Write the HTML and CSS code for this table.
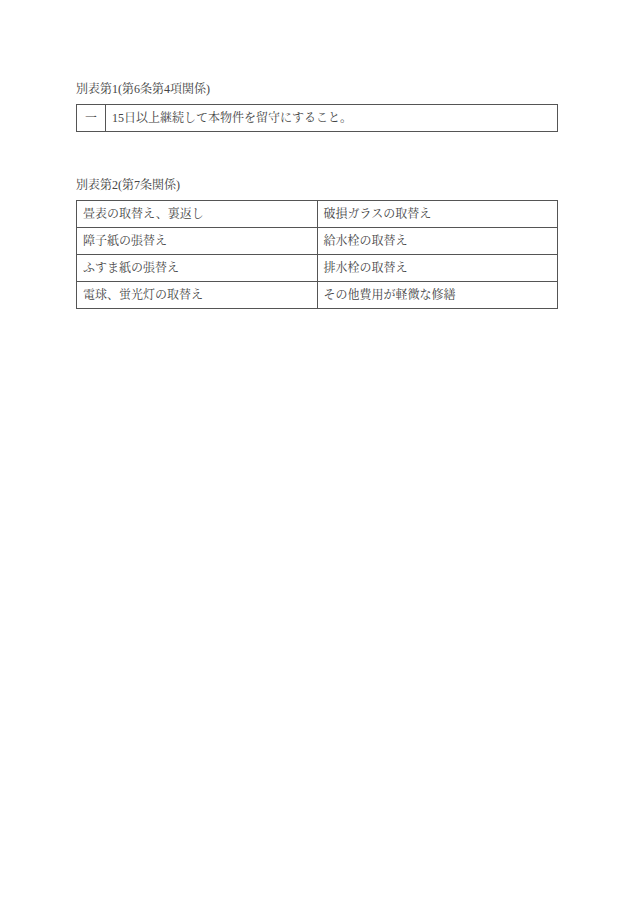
FILE: index.html
```html
<!DOCTYPE html>
<html lang="ja">
<head>
<meta charset="utf-8">
<link rel="stylesheet" href="styles.css">
</head>
<body>
<div class="page">
  <section class="block first">
    <p class="caption">別表第1(第6条第4項関係)</p>
    <table class="tbl tbl1">
      <tr><td class="num">一</td><td>15日以上継続して本物件を留守にすること。</td></tr>
    </table>
  </section>
  <section class="block second">
    <p class="caption">別表第2(第7条関係)</p>
    <table class="tbl tbl2">
      <tr><td>畳表の取替え、裏返し</td><td>破損ガラスの取替え</td></tr>
      <tr><td>障子紙の張替え</td><td>給水栓の取替え</td></tr>
      <tr><td>ふすま紙の張替え</td><td>排水栓の取替え</td></tr>
      <tr><td>電球、蛍光灯の取替え</td><td>その他費用が軽微な修繕</td></tr>
    </table>
  </section>
</div>
</body>
</html>
```
FILE: styles.css
```css
html, body {
  margin: 0;
  padding: 0;
  background: #fff;
}
body {
  font-family: "Liberation Serif", "Noto Serif CJK JP", "Noto Sans CJK JP", serif;
  color: #444;
  font-size: 12px;
}
.page {
  padding: 81px 0 0 76px;
  width: 482px;
}
.caption {
  margin: 0;
  height: 16px;
  line-height: 16px;
}
.block.first .caption { margin-bottom: 7px; }
.block.second { margin-top: 45px; }
.block.second .caption { margin-bottom: 7px; }
.tbl {
  width: 482px;
  border-collapse: collapse;
  table-layout: fixed;
}
.tbl td {
  border: 1px solid #555;
  padding: 0 0 0 6px;
  line-height: 16px;
  vertical-align: middle;
  box-sizing: border-box;
  height: 27px;
}
.tbl1 td.num {
  width: 29px;
  padding: 0;
  text-align: center;
}
.tbl2 td { width: 50%; }
```
